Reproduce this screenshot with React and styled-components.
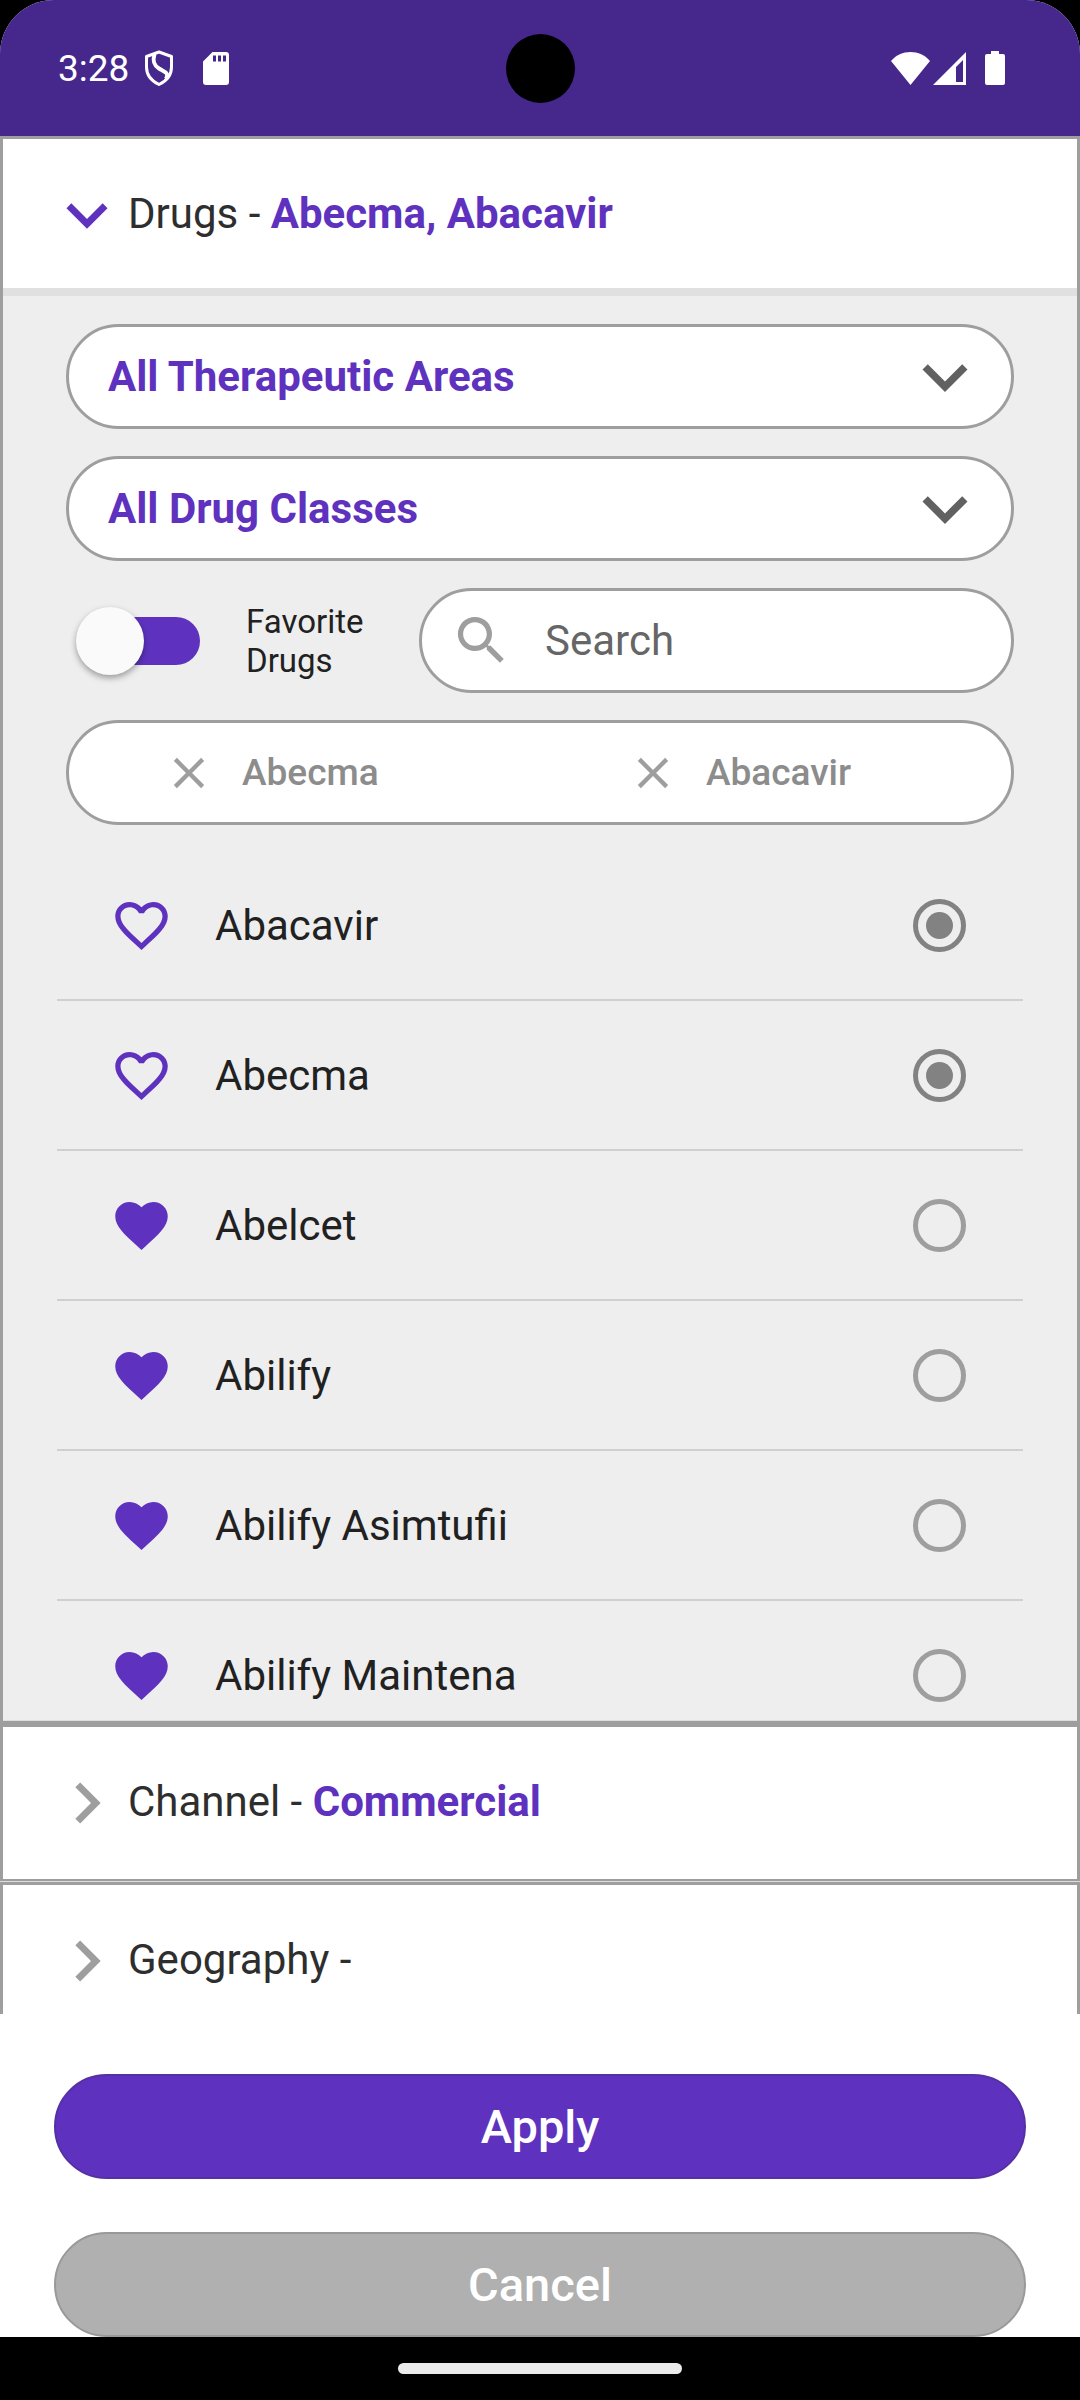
import React, { useState } from 'react';

import styled, { createGlobalStyle, ThemeProvider } from 'styled-components';

const theme = {
  primary: '#5e32be',
  primaryDark: '#46278c',
  border: '#9e9e9e',
  line: '#cfcfcf',
  panel: '#eeeeee',
  text: '#212121',
  heading: '#2e2e2e',
  muted: '#8c8c8c',
};

const initialDrugs = [
  { name: 'Abacavir', favorite: false },
  { name: 'Abecma', favorite: false },
  { name: 'Abelcet', favorite: true },
  { name: 'Abilify', favorite: true },
  { name: 'Abilify Asimtufii', favorite: true },
  { name: 'Abilify Maintena', favorite: true },
];

const paths = {
  down: 'M7.41 8.59 12 13.17l4.59-4.58L18 10l-6 6-6-6z',
  right: 'M8.59 16.59 13.17 12 8.59 7.41 10 6l6 6-6 6z',
  close: 'M19 6.41 17.59 5 12 10.59 6.41 5 5 6.41 10.59 12 5 17.59 6.41 19 12 13.41 17.59 19 19 17.59 13.41 12z',
  search:
    'M15.5 14h-.79l-.28-.27A6.471 6.471 0 0 0 16 9.5 6.5 6.5 0 1 0 9.5 16c1.61 0 3.09-.59 4.23-1.57l.27.28v.79l5 4.99L20.49 19l-4.99-5zm-6 0C7.01 14 5 11.99 5 9.5S7.01 5 9.5 5 14 7.01 14 9.5 11.99 14 9.5 14z',
  heart:
    'm12 21.35-1.45-1.32C5.4 15.36 2 12.28 2 8.5 2 5.42 4.42 3 7.5 3c1.74 0 3.41.81 4.5 2.09C13.09 3.81 14.76 3 16.5 3 19.58 3 22 5.42 22 8.5c0 3.78-3.4 6.86-8.55 11.54L12 21.35z',
  heartOutline:
    'M16.5 3c-1.74 0-3.41.81-4.5 2.09C10.91 3.81 9.24 3 7.5 3 4.42 3 2 5.42 2 8.5c0 3.78 3.4 6.86 8.55 11.54L12 21.35l1.45-1.32C18.6 15.36 22 12.28 22 8.5 22 5.42 19.58 3 16.5 3zm-4.4 15.55-.1.1-.1-.1C7.14 14.24 4 11.39 4 8.5 4 6.5 5.5 5 7.5 5c1.54 0 3.04.99 3.57 2.36h1.87C13.46 5.99 14.96 5 16.5 5c2 0 3.5 1.5 3.5 3.5 0 2.89-3.14 5.74-7.9 10.05z',
};

const Icon = ({ name, size }) => (
  <Glyph viewBox="0 0 24 24" width={size} height={size} aria-hidden="true">
    <path d={paths[name]} />
  </Glyph>
);

const StatusBar = () => (
  <Status>
    <StatusGroup>
      <Clock>3:28</Clock>
      <svg width="30" height="36" viewBox="0 0 30 36" fill="none" stroke="#fff">
        <path d="M15 2 27.5 6.5V17C27.5 25 22.5 31 15 34.5 7.5 31 2.5 25 2.5 17V6.5z" strokeWidth="3" strokeLinejoin="round" />
        <path d="M10.500 4C8.500 11 9.500 15 15 18.500 21 22 25.500 23 22 29" strokeWidth="4" />
      </svg>
      <CardIcon width="26" height="33" viewBox="0 0 26 33" fill="#fff">
        <path
          fillRule="evenodd"
          d="M9.500 0H23a3 3 0 0 1 3 3v27a3 3 0 0 1-3 3H3a3 3 0 0 1-3-3V9.500zM10 3.500v6h3v-6zm5 0v6h3v-6zm5 0v6h3v-6z"
        />
      </CardIcon>
    </StatusGroup>
    <Camera />
    <StatusGroup $end>
      <svg width="39" height="33" viewBox="0 0 39 33" fill="#fff">
        <path d="M19.500 33 0 9C5 3 12 0 19.500 0S34 3 39 9z" />
      </svg>
      <svg width="33" height="33" viewBox="0 0 33 33" fill="#fff">
        <path fillRule="evenodd" d="M33 0v33H0zM30 8l-7 7v15h7z" />
      </svg>
      <BatteryIcon width="20" height="34" viewBox="0 0 20 34" fill="#fff">
        <path d="M6 0h8v3h4a2 2 0 0 1 2 2v27a2 2 0 0 1-2 2H2a2 2 0 0 1-2-2V5a2 2 0 0 1 2-2h4z" />
      </BatteryIcon>
    </StatusGroup>
  </Status>
);

const PanelHeader = ({ title, value, open }) => (
  <Header type="button" aria-expanded={!!open} $open={open}>
    <Icon name={open ? 'down' : 'right'} size={82} />
    <HeaderText>
      {title} - <strong>{value}</strong>
    </HeaderText>
  </Header>
);

const Dropdown = ({ label }) => (
  <SelectPill>
    <select aria-label={label} defaultValue="all">
      <option value="all">{label}</option>
    </select>
    <Icon name="down" size={90} />
  </SelectPill>
);

const App = () => {
  const [drugs, setDrugs] = useState(initialDrugs);
  const [selected, setSelected] = useState(['Abecma', 'Abacavir']);
  const [search, setSearch] = useState('');

  const toggleFavorite = (name) => setDrugs(drugs.map((d) => (d.name === name ? { ...d, favorite: !d.favorite } : d)));
  const toggleSelected = (name) => setSelected(selected.includes(name) ? selected.filter((s) => s !== name) : [...selected, name]);

  const visible = drugs.filter((d) => d.name.toLowerCase().includes(search.toLowerCase()));

  return (
    <ThemeProvider theme={theme}>
      <GlobalStyle />
      <Screen>
        <StatusBar />
        <Panels>
          <Panel $open>
            <PanelHeader title="Drugs" value={selected.join(', ')} open />
            <PanelBody>
              <Filters>
                <Dropdown label="All Therapeutic Areas" />
                <Dropdown label="All Drug Classes" />
                <SearchRow>
                  <Switch type="checkbox" role="switch" id="favorites" />
                  <SwitchLabel htmlFor="favorites">Favorite Drugs</SwitchLabel>
                  <SearchPill>
                    <Icon name="search" size={63} />
                    <input
                      type="text"
                      placeholder="Search"
                      aria-label="Search"
                      value={search}
                      onChange={(e) => setSearch(e.target.value)}
                    />
                  </SearchPill>
                </SearchRow>
                <ChipsPill>
                  {selected.map((name) => (
                    <Chip key={name} type="button" onClick={() => toggleSelected(name)}>
                      <Icon name="close" size={52} />
                      {name}
                    </Chip>
                  ))}
                </ChipsPill>
              </Filters>
              <DrugList>
                {visible.map(({ name, favorite }) => (
                  <DrugRow key={name}>
                    <HeartButton type="button" aria-label={`Favorite ${name}`} aria-pressed={favorite} onClick={() => toggleFavorite(name)}>
                      <Icon name={favorite ? 'heart' : 'heartOutline'} size={63} />
                    </HeartButton>
                    <label htmlFor={`drug-${name}`}>{name}</label>
                    <Radio
                      type="radio"
                      id={`drug-${name}`}
                      checked={selected.includes(name)}
                      onClick={() => toggleSelected(name)}
                      readOnly
                    />
                  </DrugRow>
                ))}
              </DrugList>
            </PanelBody>
          </Panel>
          <Panel>
            <PanelHeader title="Channel" value="Commercial" />
          </Panel>
          <Panel>
            <PanelHeader title="Geography" />
          </Panel>
        </Panels>
        <Actions>
          <ActionButton type="button" $primary>
            Apply
          </ActionButton>
          <ActionButton type="button">Cancel</ActionButton>
        </Actions>
        <NavBar>
          <NavHandle />
        </NavBar>
      </Screen>
    </ThemeProvider>
  );
};

const GlobalStyle = createGlobalStyle`
  * {
    box-sizing: border-box;
  }
  body {
    margin: 0;
    background: #000;
    font-family: Roboto, sans-serif;
    font-size: 42px;
  }
  button, input, select {
    margin: 0;
    padding: 0;
    border: 0;
    background: transparent;
    color: inherit;
    font: inherit;
  }
  button {
    cursor: pointer;
  }
`;

const Glyph = styled.svg`
  display: block;
  flex-shrink: 0;
  fill: currentColor;
`;

const Screen = styled.div`
  display: flex;
  flex-direction: column;
  height: 100vh;
  overflow: hidden;
  border-radius: 54px 54px 0 0;
  background: #fff;
`;

const Status = styled.header`
  display: grid;
  grid-template-columns: 1fr auto 1fr;
  align-items: center;
  flex-shrink: 0;
  height: 136px;
  padding: 0 58px;
  background: ${({ theme }) => theme.primaryDark};
`;

const StatusGroup = styled.div`
  display: flex;
  align-items: center;
  justify-content: ${({ $end }) => ($end ? 'flex-end' : 'flex-start')};
  gap: 3px;
  padding-right: 17px;
`;

const Clock = styled.span`
  margin-right: 12px;
  color: #fff;
  font-size: 37px;
`;

const CardIcon = styled.svg`
  margin-left: 26px;
`;

const BatteryIcon = styled.svg`
  margin-left: 16px;
`;

const Camera = styled.div`
  width: 69px;
  height: 69px;
  border-radius: 50%;
  background: #000;
`;

const Panels = styled.main`
  flex: 1;
  min-height: 0;
  overflow: hidden;
  background: #ddd;
`;

const Panel = styled.section`
  margin-bottom: ${({ $open }) => ($open ? 0 : 1)}px;
  border: 3px solid ${({ theme }) => theme.border};
  border-bottom-width: ${({ $open }) => ($open ? 3 : 2)}px;
  background: #fff;
`;

const Header = styled.button`
  display: flex;
  align-items: center;
  width: 100%;
  height: 152px;
  padding: 0 43px;
  color: ${({ theme, $open }) => ($open ? theme.primary : theme.border)};
  text-align: left;
`;

const HeaderText = styled.span`
  padding-bottom: 3px;
  color: ${({ theme }) => theme.heading};
  strong {
    color: ${({ theme }) => theme.primary};
    font-weight: 700;
  }
`;

const PanelBody = styled.div`
  margin-top: -3px;
  border-top: 8px solid #e0e0e0;
  border-bottom: 1px solid #ddd;
  background: ${({ theme }) => theme.panel};
`;

const Filters = styled.div`
  display: flex;
  flex-direction: column;
  gap: 27px;
  padding: 28px 63px 26px;
`;

const Pill = styled.div`
  height: 105px;
  border: 3px solid ${({ theme }) => theme.border};
  border-radius: 53px;
  background: #fff;
`;

const SelectPill = styled(Pill)`
  display: grid;
  align-items: center;
  select {
    grid-area: 1 / 1;
    width: 100%;
    height: 100%;
    padding: 0 120px 0 39px;
    border-radius: 53px;
    appearance: none;
    color: ${({ theme }) => theme.primary};
    font-weight: 700;
  }
  svg {
    grid-area: 1 / 1;
    justify-self: end;
    margin-right: 21px;
    color: #616161;
    pointer-events: none;
  }
`;

const SearchRow = styled.div`
  display: flex;
  align-items: center;
`;

const Switch = styled.input`
  position: relative;
  flex-shrink: 0;
  width: 112px;
  height: 48px;
  margin: 0 46px 0 22px;
  border-radius: 24px;
  appearance: none;
  background: ${({ theme }) => theme.primary};
  &::before {
    content: '';
    position: absolute;
    top: -10px;
    left: -12px;
    width: 68px;
    height: 68px;
    border-radius: 50%;
    background: #fafafa;
    box-shadow: 0 3px 6px rgba(0, 0, 0, 0.35);
  }
  &:checked::before {
    left: 56px;
  }
`;

const SwitchLabel = styled.label`
  flex-shrink: 0;
  width: 173px;
  padding-right: 50px;
  color: ${({ theme }) => theme.text};
  font-size: 33px;
  line-height: 39px;
`;

const SearchPill = styled(Pill)`
  display: flex;
  flex: 1;
  align-items: center;
  gap: 32px;
  min-width: 0;
  padding: 0 40px 0 28px;
  color: ${({ theme }) => theme.border};
  input {
    flex: 1;
    min-width: 0;
    color: ${({ theme }) => theme.text};
    outline: none;
  }
  input::placeholder {
    color: #666;
  }
`;

const ChipsPill = styled(Pill)`
  display: grid;
  grid-template-columns: 1fr 1fr;
  padding: 0 7px;
`;

const Chip = styled.button`
  display: flex;
  align-items: center;
  gap: 27px;
  padding-left: 87px;
  color: ${({ theme }) => theme.muted};
  font-size: 37px;
  font-weight: 500;
  svg {
    color: ${({ theme }) => theme.border};
  }
`;

const DrugList = styled.ul`
  height: 869px;
  margin: 0;
  padding: 0 54px;
  overflow-y: auto;
  scrollbar-width: none;
  list-style: none;
`;

const DrugRow = styled.li`
  display: flex;
  align-items: center;
  gap: 42px;
  height: 150px;
  padding: 0 57px 0 53px;
  border-bottom: 2px solid ${({ theme }) => theme.line};
  color: ${({ theme }) => theme.text};
  label {
    flex: 1;
  }
`;

const HeartButton = styled.button`
  color: ${({ theme }) => theme.primary};
`;

const Radio = styled.input`
  display: grid;
  place-items: center;
  width: 53px;
  height: 53px;
  border: 5px solid ${({ theme }) => theme.border};
  border-radius: 50%;
  appearance: none;
  &:checked {
    border-color: #828282;
  }
  &:checked::before {
    content: '';
    width: 27px;
    height: 27px;
    border-radius: 50%;
    background: #828282;
  }
`;

const Actions = styled.footer`
  display: flex;
  flex-direction: column;
  gap: 53px;
  padding: 60px 54px 0;
`;

const ActionButton = styled.button`
  height: 105px;
  border: 2px solid ${({ $primary }) => ($primary ? '#5430a4' : '#999')};
  border-radius: 53px;
  background: ${({ theme, $primary }) => ($primary ? theme.primary : '#b0b0b0')};
  color: #fff;
  font-size: 47px;
  font-weight: 500;
`;

const NavBar = styled.div`
  display: grid;
  flex-shrink: 0;
  place-items: center;
  height: 63px;
  background: #000;
`;

const NavHandle = styled.div`
  width: 284px;
  height: 11px;
  border-radius: 6px;
  background: #ebebeb;
`;

export default App;
